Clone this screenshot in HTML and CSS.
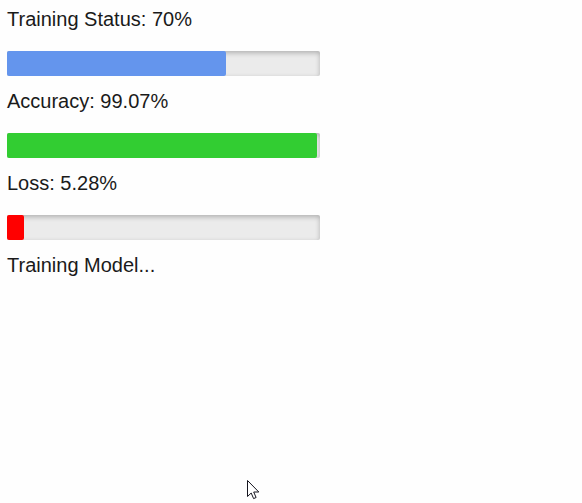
FILE: index.html
```
<!DOCTYPE html>
<html lang="en">
<head>
<meta charset="utf-8">
<title>Training Status</title>
<link rel="stylesheet" href="styles.css">
</head>
<body>
<main class="training">
  <div class="metric">
    <label class="metric-label" for="status">Training Status: 70%</label>
    <progress class="bar bar-status" id="status" max="100" value="70"></progress>
  </div>
  <div class="metric">
    <label class="metric-label" for="accuracy">Accuracy: 99.07%</label>
    <progress class="bar bar-accuracy" id="accuracy" max="100" value="99.07"></progress>
  </div>
  <div class="metric">
    <label class="metric-label" for="loss">Loss: 5.28%</label>
    <progress class="bar bar-loss" id="loss" max="100" value="5.28"></progress>
  </div>
  <p class="message">Training Model...</p>
</main>
<svg class="pointer" width="13" height="20" viewBox="0 0 13 20" aria-hidden="true">
  <path d="M.5.5v16l3.7-3.5 2.4 5.6 2.5-1.1L6.700 12H11.800z" fill="#fff" stroke="#15151f" stroke-width="1"/>
</svg>
</body>
</html>
```
FILE: styles.css
```
body {
  margin: 0;
  background: #fefefe;
  color: #1a1a1a;
  font-family: Arial, "Liberation Sans", sans-serif;
  font-size: 20px;
  line-height: 24px;
}

.training {
  display: flex;
  flex-direction: column;
  gap: 13px;
  padding: 7px;
}

.metric {
  display: flex;
  flex-direction: column;
  gap: 20px;
}

.bar {
  appearance: none;
  width: 100%;
  max-width: 313px;
  height: 25px;
  border: 0;
  --fill: cornflowerblue;
}

.bar-accuracy {
  --fill: limegreen;
}

.bar-loss {
  --fill: red;
}

.bar::-webkit-progress-bar {
  background: #ebebeb;
  border-radius: 2px;
  box-shadow: 0 2px 5px rgba(0, 0, 0, 0.25) inset;
}

.bar::-webkit-progress-value {
  background: var(--fill);
  border-radius: 2px;
}

.bar::-moz-progress-bar {
  background: var(--fill);
  border-radius: 2px;
}

.message {
  margin: 0;
}

.pointer {
  position: absolute;
  left: 247px;
  top: 480px;
}
```
